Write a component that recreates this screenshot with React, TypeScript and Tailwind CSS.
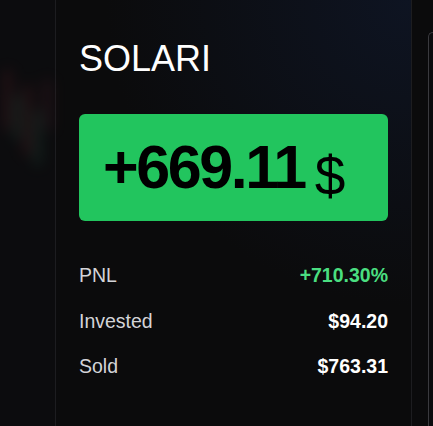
const candles = [
  { x: 4, y: 70, h: 60, c: "#5a1d24" },
  { x: 14, y: 95, h: 45, c: "#1d4a3a" },
  { x: 24, y: 85, h: 70, c: "#5a1d24" },
  { x: 34, y: 110, h: 55, c: "#1d4a3a" },
  { x: 44, y: 80, h: 50, c: "#4a1d28" },
];

function ChartBlur() {
  return (
    <svg width="55" height="426" viewBox="0 0 55 426" className="blur-[7px] opacity-40">
      {candles.map((k, i) => (
        <rect key={i} x={k.x} y={k.y} width="7" height={k.h} fill={k.c} />
      ))}
    </svg>
  );
}

const rows = [
  { label: "PNL", value: "+710.30%", green: true },
  { label: "Invested", value: "$94.20", green: false },
  { label: "Sold", value: "$763.31", green: false },
];

export default function App() {
  return (
    <div
      className="flex h-[426px] w-[433px] overflow-hidden bg-[#0b0b0c] text-white"
      style={{ fontFamily: '"Liberation Sans", Arial, sans-serif' }}
    >
      {/* chart behind, blurred */}
      <div className="w-[55px] shrink-0 bg-[#0c0c0e]">
        <ChartBlur />
      </div>

      {/* main card */}
      <div className="flex w-[357px] shrink-0 flex-col border-x border-[#1d1d20] bg-[radial-gradient(circle_at_100%_0%,#0e1422_0%,#0b0b0c_55%)] px-[23px] pt-[41px]">
        <h1 className="text-[36px] leading-none font-normal text-white">SOLARI</h1>

        <div className="mt-[37px] flex h-[107px] items-center rounded-md bg-[#22c55e] pl-6 text-black">
          <span className="text-[61px] leading-none font-bold tracking-[-0.04em]">+669.11</span>
          <span className="mt-[18px] ml-2.5 text-[55px] leading-none font-normal">$</span>
        </div>

        <div className="mt-10 flex flex-col gap-[17.5px]">
          {rows.map((r) => (
            <div key={r.label} className="flex items-center justify-between text-[19.5px] leading-7">
              <span className="text-[#d4d4d8]">{r.label}</span>
              <span className={r.green ? "font-bold text-[#4ade80]" : "font-bold text-white"}>{r.value}</span>
            </div>
          ))}
        </div>
      </div>

      {/* next panel */}
      <div className="ml-4 mt-8 flex-1 rounded-tl-lg border-t border-l border-[#3a3a3e] bg-[#0b0b0d]" />
    </div>
  );
}
